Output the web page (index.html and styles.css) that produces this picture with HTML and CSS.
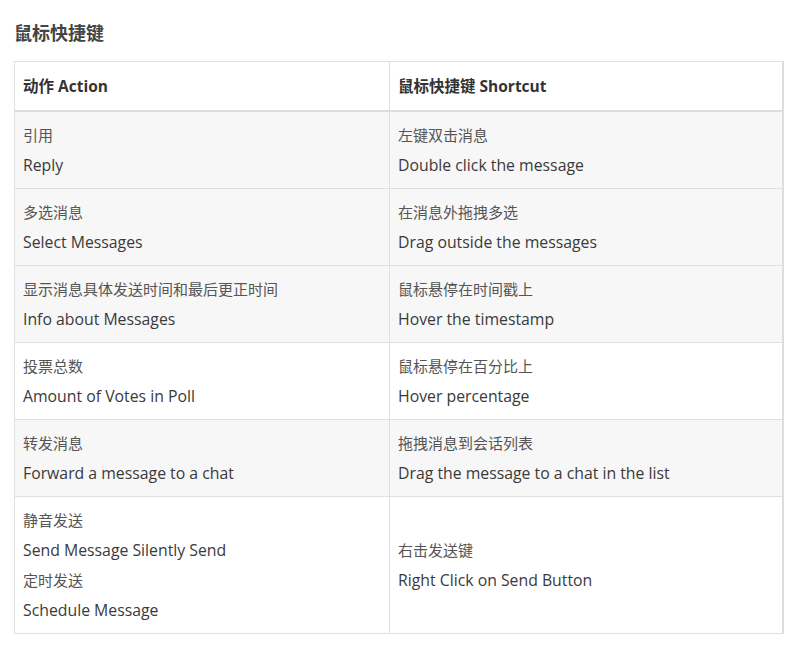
FILE: index.html
```html
<!DOCTYPE html>
<html lang="zh-CN">
<head>
    <meta charset="UTF-8">
    <meta name="viewport" content="width=device-width, initial-scale=1.0">
    <title>鼠标快捷键</title>
    <link rel="stylesheet" href="styles.css">
</head>
<body>
    <div class="container">
        <h2>鼠标快捷键</h2>
        <table class="shortcuts">
            <thead>
                <tr>
                    <th class="col-action">动作 Action</th>
                    <th>鼠标快捷键 Shortcut</th>
                </tr>
            </thead>
            <tbody>
                <tr class="shade">
                    <td><div class="zh">引用</div><div class="en">Reply</div></td>
                    <td><div class="zh">左键双击消息</div><div class="en">Double click the message</div></td>
                </tr>
                <tr class="shade">
                    <td><div class="zh">多选消息</div><div class="en">Select Messages</div></td>
                    <td><div class="zh">在消息外拖拽多选</div><div class="en">Drag outside the messages</div></td>
                </tr>
                <tr class="shade">
                    <td><div class="zh">显示消息具体发送时间和最后更正时间</div><div class="en">Info about Messages</div></td>
                    <td><div class="zh">鼠标悬停在时间戳上</div><div class="en">Hover the timestamp</div></td>
                </tr>
                <tr>
                    <td><div class="zh">投票总数</div><div class="en">Amount of Votes in Poll</div></td>
                    <td><div class="zh">鼠标悬停在百分比上</div><div class="en">Hover percentage</div></td>
                </tr>
                <tr class="shade">
                    <td><div class="zh">转发消息</div><div class="en">Forward a message to a chat</div></td>
                    <td><div class="zh">拖拽消息到会话列表</div><div class="en">Drag the message to a chat in the list</div></td>
                </tr>
                <tr>
                    <td>
                        <div class="zh">静音发送</div>
                        <div class="en">Send Message Silently Send</div>
                        <div class="zh">定时发送</div>
                        <div class="en">Schedule Message</div>
                    </td>
                    <td><div class="zh">右击发送键</div><div class="en">Right Click on Send Button</div></td>
                </tr>
            </tbody>
        </table>
    </div>
</body>
</html>
```

FILE: styles.css
```css
body {
    margin: 0;
    padding: 0 14px;
    background: #fff;
    font-family: "Open Sans", "Noto Sans CJK SC", sans-serif;
    color: #333;
}
.container {
    width: 770px;
}
h2 {
    margin: 0;
    padding: 21px 0 15px;
    font-size: 18px;
    line-height: 25px;
    font-weight: 700;
    color: #444;
}
.shortcuts {
    width: 770px;
    border-collapse: collapse;
    border: 1px solid #ddd;
    border-right: 2px solid #ddd;
}
.shortcuts th,
.shortcuts td {
    padding: 8px 8px;
    text-align: left;
    vertical-align: middle;
    border: 1px solid #e0e0e0;
}
.shortcuts th {
    padding: 9px 8px;
    height: 30px;
    line-height: 30px;
    font-size: 15.5px;
    font-weight: 700;
    color: #333;
    border-bottom: 2px solid #ddd;
}
.col-action {
    width: 358px;
}
.shortcuts tr.shade td {
    background: #f7f7f7;
}
.zh,
.en {
    height: 30px;
    line-height: 30px;
    white-space: nowrap;
}
.zh {
    font-size: 15px;
    color: #555;
}
.en {
    font-size: 15.8px;
    color: #3a3a3a;
}
```
